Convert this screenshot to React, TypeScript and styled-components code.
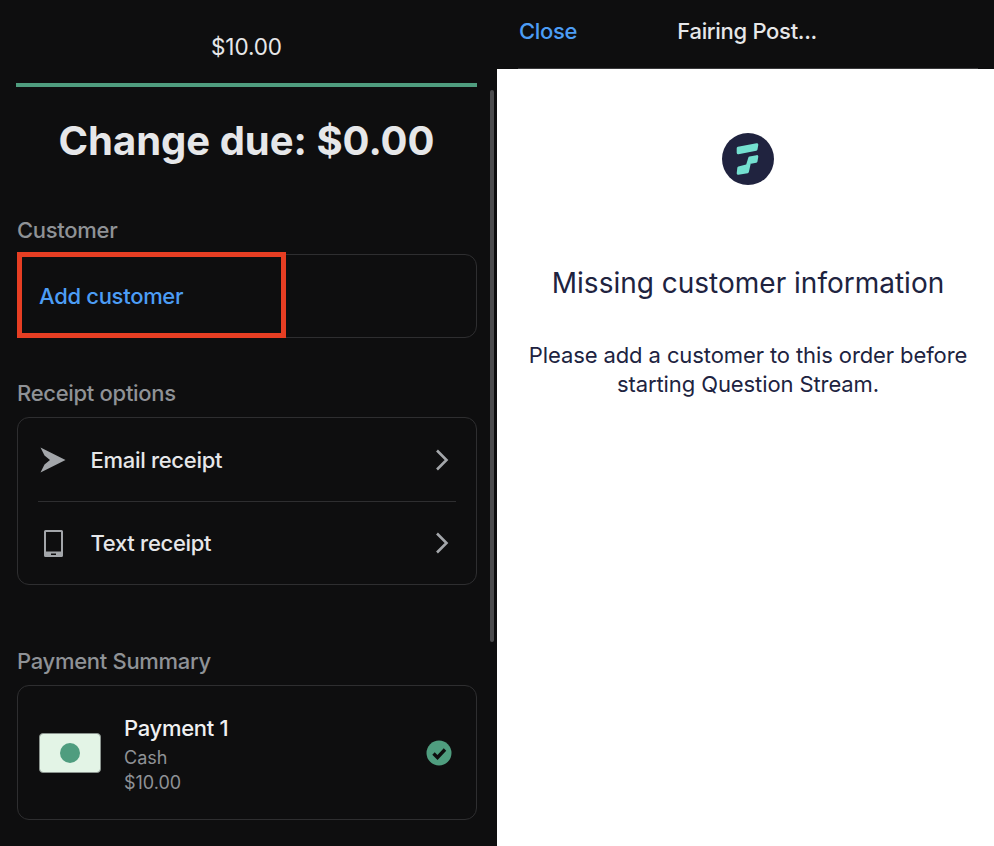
import { createGlobalStyle, styled } from "styled-components"

const GlobalStyle = createGlobalStyle`
  html, body {
    margin: 0;
    padding: 0;
    background: #0e0e0f;
  }
  body {
    font-family: Inter, "Liberation Sans", sans-serif;
  }
`

const Page = styled.div`
  display: grid;
  grid-template-columns: 497px 497px;
  width: 994px;
  height: 846px;
  overflow: hidden;
`

const LeftPanel = styled.div`
  position: relative;
  display: flex;
  flex-direction: column;
  padding: 0 20px 0 16px;
  background: #0e0e0f;
`

const Scrollbar = styled.div`
  position: absolute;
  top: 90px;
  left: 490px;
  width: 4px;
  height: 552px;
  border-radius: 2px;
  background: #4b4b4d;
`

const Amount = styled.div`
  height: 83px;
  padding-top: 32.5px;
  box-sizing: border-box;
  text-align: center;
  color: #e6e7e9;
  font-size: 22.5px;
  line-height: 28px;
  letter-spacing: -0.1px;
`

const Progress = styled.div`
  height: 4px;
  background: #4f9d7f;
`

const ChangeDue = styled.h1`
  margin: 27px 0 0;
  text-align: center;
  color: #e6e7e9;
  font-size: 40px;
  line-height: 54px;
  font-weight: 700;
`

const SectionLabel = styled.div<{ $top: number }>`
  margin: ${(p) => p.$top}px 0 10px 1px;
  color: #8f9296;
  font-size: 22px;
  line-height: 28px;
  font-weight: 500;
  letter-spacing: -0.3px;
`

const Card = styled.div`
  position: relative;
  margin-left: 1px;
  width: 460px;
  box-sizing: border-box;
  border: 1.5px solid #2e2e30;
  border-radius: 12px;
`

const AddCustomerRow = styled.div`
  display: flex;
  align-items: center;
  height: 82px;
  padding-left: 21px;
  color: #4c9df5;
  font-size: 22px;
  font-weight: 500;
  letter-spacing: -0.3px;
`

const Highlight = styled.div`
  position: absolute;
  top: -3px;
  left: -1.5px;
  width: 269px;
  height: 86px;
  box-sizing: border-box;
  border: 5px solid #e63e23;
`

const ReceiptRow = styled.div`
  display: flex;
  align-items: center;
  height: 83px;
  box-sizing: border-box;
  margin: 0 20px;
  & + & {
    border-top: 1px solid #2e2e30;
  }
`

const RowIcon = styled.div`
  display: flex;
  justify-content: center;
  width: 30px;
  margin-right: 22.5px;
`

const RowLabel = styled.div`
  flex: 1;
  color: #e6e7e9;
  font-size: 22px;
  font-weight: 500;
  letter-spacing: -0.3px;
`

const ChevronIcon = styled.svg`
  margin-right: 6px;
`

const PaymentRow = styled.div`
  display: flex;
  align-items: center;
  height: 133px;
  padding: 0 24px 0 21px;
`

const CashNote = styled.div`
  display: flex;
  align-items: center;
  justify-content: center;
  width: 62px;
  height: 40px;
  box-sizing: border-box;
  border: 1.5px solid #8a938e;
  border-radius: 4px;
  background: #e3f4e6;
  margin-right: 23px;
`

const CashDot = styled.div`
  width: 20px;
  height: 20px;
  border-radius: 50%;
  background: #4f9d7f;
`

const PaymentText = styled.div`
  display: flex;
  flex: 1;
  flex-direction: column;
  padding-top: 3px;
`

const PaymentTitle = styled.div`
  margin-bottom: 3px;
  color: #f0f1f2;
  font-size: 22px;
  line-height: 28px;
  font-weight: 500;
  letter-spacing: -0.3px;
`

const PaymentMeta = styled.div`
  color: #8f9296;
  font-size: 18px;
  line-height: 25px;
`

const RightPanel = styled.div`
  display: flex;
  flex-direction: column;
  background: #ffffff;
`

const Bar = styled.div`
  position: relative;
  display: flex;
  align-items: center;
  height: 69px;
  padding: 0 0 7px 22px;
  box-sizing: border-box;
  background: #0e0e0f;
`

const BarRule = styled.div`
  position: absolute;
  left: 21px;
  right: 16px;
  bottom: 0;
  height: 1px;
  background: #3a3a3c;
`

const CloseLink = styled.div`
  color: #4c9df5;
  font-size: 22px;
  font-weight: 500;
  letter-spacing: -0.3px;
`

const BarTitle = styled.div`
  margin-left: 100px;
  color: #e6e7e9;
  font-size: 22px;
  font-weight: 500;
  letter-spacing: -0.3px;
`

const Body = styled.div`
  display: flex;
  flex-direction: column;
  align-items: center;
  padding: 64px 20px 0 25px;
`

const Heading = styled.h2`
  margin: 79px 0 0;
  color: #20233f;
  font-size: 28px;
  line-height: 38px;
  font-weight: 400;
`

const Message = styled.p`
  margin: 39px 0 0;
  text-align: center;
  color: #20233f;
  font-size: 22px;
  line-height: 29px;
  font-weight: 400;
  letter-spacing: -0.1px;
`

const Chevron = () => (
  <ChevronIcon width="16" height="24" viewBox="0 0 16 24" fill="none">
    <path d="M3 2.500l9.500 9.500-9.500 9.500" stroke="#a3a6aa" strokeWidth="2.6" />
  </ChevronIcon>
)

const SendIcon = () => (
  <svg width="26" height="26" viewBox="0 0 26 26">
    <path d="M.5 0.500L25.500 13 .5 25.500 4.500 17.500 10 13 4.500 8.500z" fill="#a3a6aa" />
  </svg>
)

const PhoneIcon = () => (
  <svg width="19" height="27" viewBox="0 0 19 27">
    <path
      fillRule="evenodd"
      d="M1.500 0h16A1.500 1.500 0 0119 1.500v24a1.500 1.500 0 01-1.500 1.500h-16A1.500 1.500 0 010 25.500v-24A1.500 1.500 0 011.500 0zM2 2v19.500h15V2zm5 21.500V25h5v-1.500z"
      fill="#a3a6aa"
    />
  </svg>
)

const CheckBadge = () => (
  <svg width="26" height="26" viewBox="0 0 26 26">
    <circle cx="13" cy="13" r="12.500" fill="#4f9d7f" />
    <path d="M7.500 13.500l4 4 7.500-8" fill="none" stroke="#0e0e0f" strokeWidth="3.400" />
  </svg>
)

const FairingLogo = () => (
  <svg width="52" height="52" viewBox="0 0 52 52">
    <circle cx="26" cy="26" r="26" fill="#20233f" />
    <g fill="#74e0d0" stroke="#74e0d0" strokeWidth="3" strokeLinejoin="round">
      <path d="M16.200 15.200L34.800 11.800 34 16.300 16.200 19.800z" />
      <path d="M27.800 25L34.800 23.600 34 28.300 27.400 29.600 25.400 38.800 16.200 40.300 16.800 35 25.400 32.800z" />
    </g>
  </svg>
)

export default function App() {
  return (
    <Page>
      <GlobalStyle />
      <LeftPanel>
        <Amount>$10.00</Amount>
        <Progress />
        <ChangeDue>Change due: $0.00</ChangeDue>
        <SectionLabel $top={48}>Customer</SectionLabel>
        <Card>
          <AddCustomerRow>Add customer</AddCustomerRow>
          <Highlight />
        </Card>
        <SectionLabel $top={41}>Receipt options</SectionLabel>
        <Card>
          <ReceiptRow>
            <RowIcon>
              <SendIcon />
            </RowIcon>
            <RowLabel>Email receipt</RowLabel>
            <Chevron />
          </ReceiptRow>
          <ReceiptRow>
            <RowIcon>
              <PhoneIcon />
            </RowIcon>
            <RowLabel>Text receipt</RowLabel>
            <Chevron />
          </ReceiptRow>
        </Card>
        <SectionLabel $top={62}>Payment Summary</SectionLabel>
        <Card>
          <PaymentRow>
            <CashNote>
              <CashDot />
            </CashNote>
            <PaymentText>
              <PaymentTitle>Payment 1</PaymentTitle>
              <PaymentMeta>Cash</PaymentMeta>
              <PaymentMeta>$10.00</PaymentMeta>
            </PaymentText>
            <CheckBadge />
          </PaymentRow>
        </Card>
        <Scrollbar />
      </LeftPanel>
      <RightPanel>
        <Bar>
          <CloseLink>Close</CloseLink>
          <BarTitle>Fairing Post...</BarTitle>
          <BarRule />
        </Bar>
        <Body>
          <FairingLogo />
          <Heading>Missing customer information</Heading>
          <Message>
            Please add a customer to this order before
            <br />
            starting Question Stream.
          </Message>
        </Body>
      </RightPanel>
    </Page>
  )
}
